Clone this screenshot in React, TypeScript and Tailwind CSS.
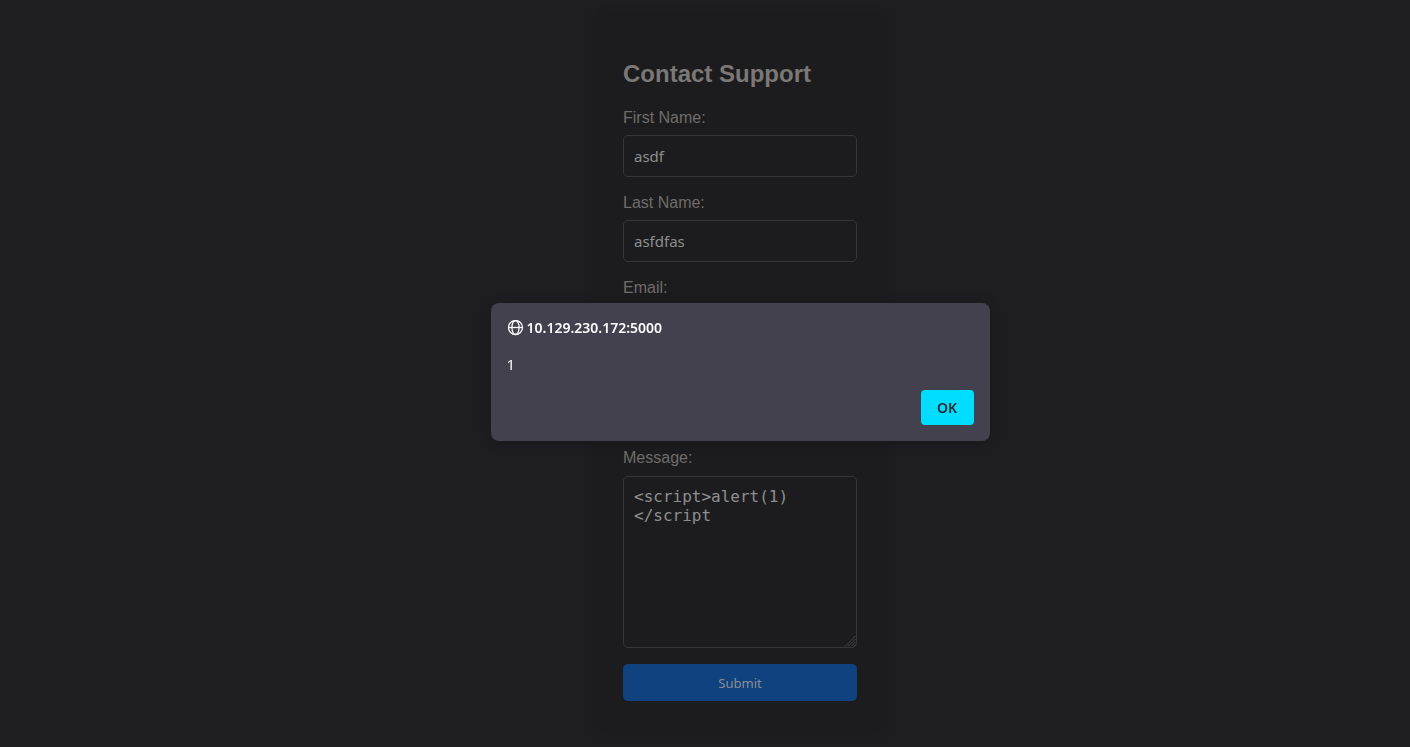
import { useState } from "react";

const labelClass = "mb-2 block text-base leading-[18px] text-[#6f6c69]";
const fieldClass =
  "block w-full rounded-[5px] border border-[#343639] bg-transparent px-[10px] text-[#8e8e8f] outline-none";

type FieldProps = { id: string; label: string; initial?: string; type?: string };

function Field({ id, label, initial = "", type = "text" }: FieldProps) {
  return (
    <div className="mb-[17px]">
      <label htmlFor={id} className={labelClass}>{label}</label>
      <input
        id={id}
        type={type}
        defaultValue={initial}
        className={`${fieldClass} h-[42px] font-['Noto_Sans',sans-serif] text-[15px]`}
      />
    </div>
  );
}

function GlobeIcon() {
  return (
    <svg viewBox="0 0 16 16" className="size-4" fill="none" stroke="currentColor" strokeWidth="1.3" aria-hidden="true">
      <circle cx="7.5" cy="7.5" r="7" />
      <ellipse cx="7.5" cy="7.5" rx="3.6" ry="7" />
      <path d="M.5 7.5h14" />
    </svg>
  );
}

function ResizeGrip() {
  return (
    <svg
      viewBox="0 0 12 12"
      className="pointer-events-none absolute right-px bottom-px size-3"
      fill="none"
      stroke="#48484a"
      strokeWidth="0.9"
      aria-hidden="true"
    >
      <path d="M1 11.5 11.5 1M4 11.5 11.5 4M7 11.5 11.5 7M9.5 11.5l2-2" />
    </svg>
  );
}

export default function App() {
  const [open, setOpen] = useState(true);

  return (
    <div className="min-h-screen bg-[#1e1e22] pl-[70px] font-['Liberation_Sans',Arial,sans-serif]">
      <main className="flex justify-center py-[10px]">
        <form
          onSubmit={(e) => e.preventDefault()}
          className="w-[294px] rounded-[15px] bg-[#1c1c1e] px-[30px] pt-[50px] pb-[30px] shadow-[0_4px_8px_rgba(28,28,30,0.6)]"
        >
          <h1 className="mb-[21px] text-2xl leading-7 font-bold text-[#7b7876]">Contact Support</h1>
          <Field id="first" label="First Name:" initial="asdf" />
          <Field id="last" label="Last Name:" initial="asfdfas" />
          <Field id="email" label="Email:" type="email" />
          <Field id="phone" label="Phone Number:" />
          <div className="mb-4">
            <label htmlFor="message" className="mb-[9px] block text-base leading-[18px] text-[#6f6c69]">
              Message:
            </label>
            <div className="relative">
              <textarea
                id="message"
                spellCheck={false}
                defaultValue={"<script>alert(1)\n</script"}
                className={`${fieldClass} h-[172px] resize-none py-[10px] font-['DejaVu_Sans_Mono',monospace] text-base leading-[19px]`}
              />
              <ResizeGrip />
            </div>
          </div>
          <button
            type="submit"
            className="block h-[37px] w-full rounded-[5px] bg-[#0f427e] pt-0.5 font-['Noto_Sans',sans-serif] text-[13px] text-[#8a8d91]"
          >
            Submit
          </button>
        </form>
      </main>

      {open && (
        <div className="fixed inset-0 flex items-start justify-center pt-[303px] pl-[70px]">
          <div
            role="alertdialog"
            aria-labelledby="origin"
            aria-describedby="alert-text"
            className="w-[499px] rounded-lg bg-[#44414e] p-4 font-['Noto_Sans',sans-serif] text-[#fbfbfe] shadow-[0_2px_14px_rgba(0,0,0,0.2)]"
          >
            <div className="flex items-center gap-[3px] pl-px">
              <GlobeIcon />
              <h2 id="origin" className="text-sm leading-[18px] font-semibold">10.129.230.172:5000</h2>
            </div>
            <p id="alert-text" className="mt-[17px] text-[15px] leading-5">1</p>
            <div className="mt-4 flex justify-end">
              <button
                type="button"
                onClick={() => setOpen(false)}
                className="h-[35px] w-[53px] rounded bg-[#00ddff] text-sm font-semibold text-[#2b2a33]"
              >
                OK
              </button>
            </div>
          </div>
        </div>
      )}
    </div>
  );
}
